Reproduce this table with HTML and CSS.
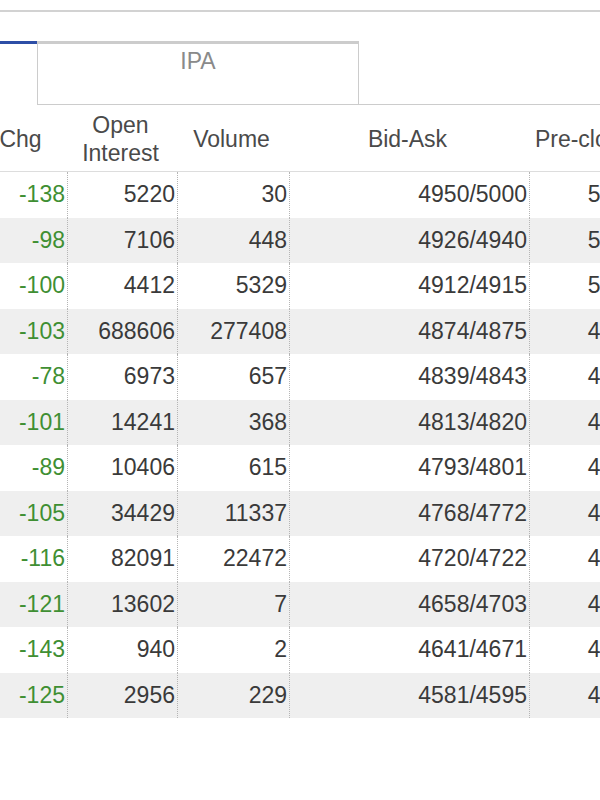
FILE: index.html
```html
<!DOCTYPE html>
<html>
<head>
<meta charset="utf-8">
<link rel="stylesheet" href="styles.css">
</head>
<body>
<div class="page">
  <div class="topline"></div>
  <div class="tabs">
    <div class="tab-active"></div>
    <div class="tab">IPA</div>
    <div class="tab-fill"></div>
  </div>
  <div class="scroller">
    <div class="grid">
      <div class="row head">
        <div class="hc">Chg</div>
        <div class="hc">Open<br>Interest</div>
        <div class="hc">Volume</div>
        <div class="hc">Bid-Ask</div>
        <div class="hc">Pre-close</div>
      </div>
      <div class="row"><div class="c g">-138</div><div class="c">5220</div><div class="c">30</div><div class="c">4950/5000</div><div class="c">5088</div></div>
      <div class="row alt"><div class="c g">-98</div><div class="c">7106</div><div class="c">448</div><div class="c">4926/4940</div><div class="c">5024</div></div>
      <div class="row"><div class="c g">-100</div><div class="c">4412</div><div class="c">5329</div><div class="c">4912/4915</div><div class="c">5012</div></div>
      <div class="row alt"><div class="c g">-103</div><div class="c">688606</div><div class="c">277408</div><div class="c">4874/4875</div><div class="c">4977</div></div>
      <div class="row"><div class="c g">-78</div><div class="c">6973</div><div class="c">657</div><div class="c">4839/4843</div><div class="c">4917</div></div>
      <div class="row alt"><div class="c g">-101</div><div class="c">14241</div><div class="c">368</div><div class="c">4813/4820</div><div class="c">4914</div></div>
      <div class="row"><div class="c g">-89</div><div class="c">10406</div><div class="c">615</div><div class="c">4793/4801</div><div class="c">4882</div></div>
      <div class="row alt"><div class="c g">-105</div><div class="c">34429</div><div class="c">11337</div><div class="c">4768/4772</div><div class="c">4873</div></div>
      <div class="row"><div class="c g">-116</div><div class="c">82091</div><div class="c">22472</div><div class="c">4720/4722</div><div class="c">4836</div></div>
      <div class="row alt"><div class="c g">-121</div><div class="c">13602</div><div class="c">7</div><div class="c">4658/4703</div><div class="c">4779</div></div>
      <div class="row"><div class="c g">-143</div><div class="c">940</div><div class="c">2</div><div class="c">4641/4671</div><div class="c">4784</div></div>
      <div class="row alt"><div class="c g">-125</div><div class="c">2956</div><div class="c">229</div><div class="c">4581/4595</div><div class="c">4706</div></div>
    </div>
  </div>
</div>
</body>
</html>
```

FILE: styles.css
```css
html, body {
  margin: 0;
  padding: 0;
  background: #ffffff;
}

.page {
  width: 600px;
  height: 800px;
  overflow: hidden;
  font-family: "Liberation Sans", Arial, Helvetica, sans-serif;
}

.topline {
  height: 2px;
  margin-top: 10px;
  background: #d2d2d2;
}

.tabs {
  display: flex;
  margin-top: 29px;
  height: 64px;
}

.tab-active {
  width: 37px;
  flex: none;
  border-top: 3px solid #2d4ea6;
}

.tab {
  width: 322px;
  flex: none;
  box-sizing: border-box;
  border: 1px solid #cccccc;
  border-top: 3px solid #cccccc;
  text-align: center;
  font-size: 23px;
  line-height: 28px;
  padding-top: 3px;
  color: #8a8a8a;
}

.tab-fill {
  flex: 1;
  border-bottom: 1px solid #cccccc;
}

.scroller {
  overflow: hidden;
}

.grid {
  margin-left: -22px;
  width: 700px;
}

.row {
  display: grid;
  grid-template-columns: 90px 110px 112px 240px 112px;
  height: 45.5px;
}

.row.head {
  height: 65px;
  border-bottom: 1px solid #dddddd;
  margin-top: 1px;
}

.row.alt {
  background: #efefef;
}

.hc {
  display: flex;
  align-items: center;
  justify-content: center;
  text-align: center;
  padding-right: 5px;
  font-size: 23px;
  line-height: 28px;
  color: #4a4a4a;
}

.c {
  box-sizing: border-box;
  border-right: 1px dotted #b5b5b5;
  text-align: right;
  padding-right: 2px;
  font-size: 23px;
  line-height: 45.5px;
  color: #3a3a3a;
}

.c.g {
  color: #3f8f33;
}
```
